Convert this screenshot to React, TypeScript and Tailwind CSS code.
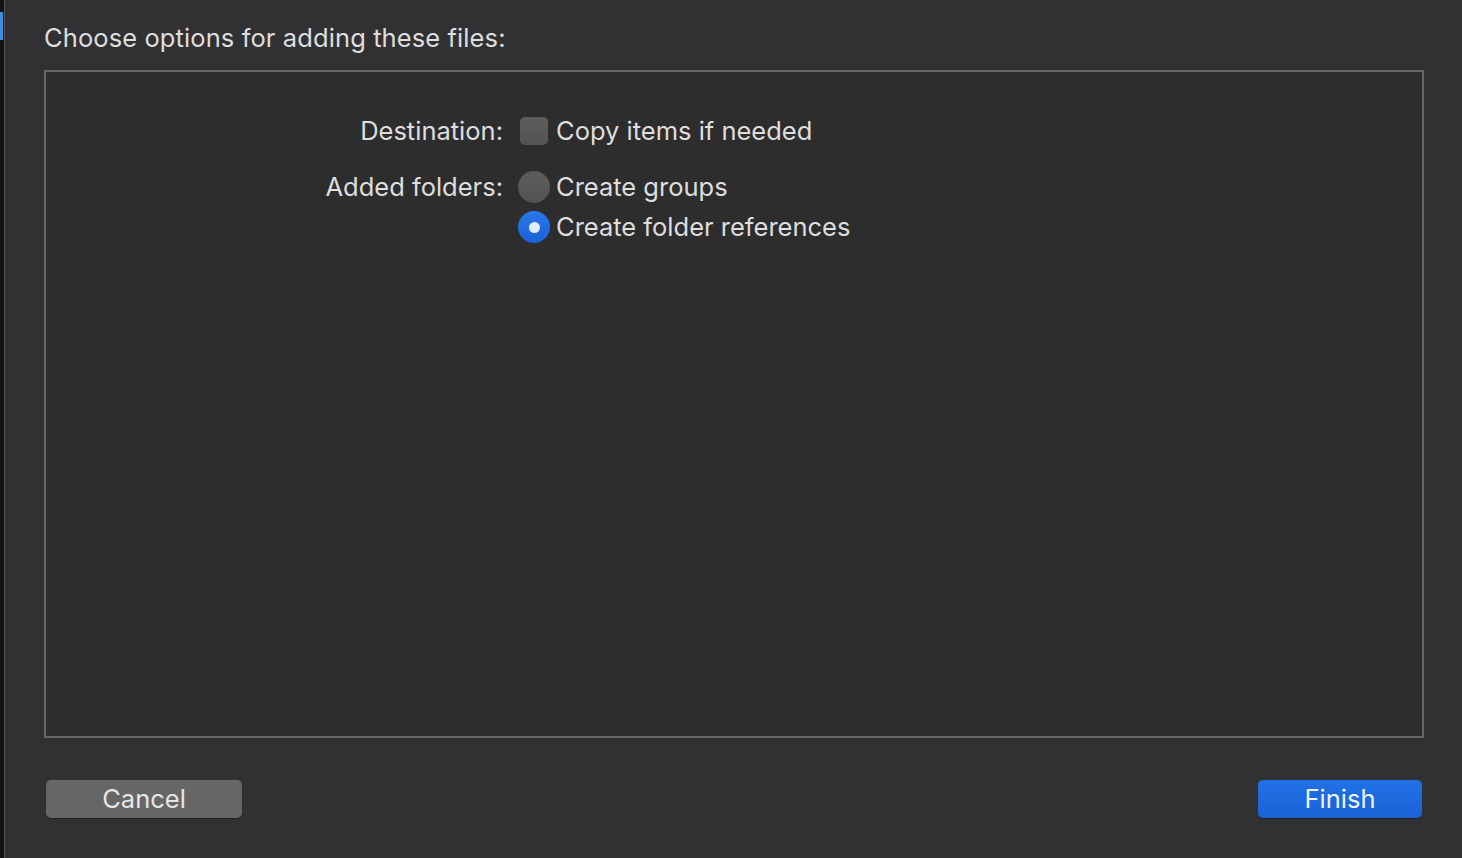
const Radio = ({ checked }: { checked?: boolean }) =>
    checked ? (
        <span className="flex h-[32px] w-[32px] items-center justify-center rounded-full bg-gradient-to-b from-[#2a78ea] to-[#1a62d6]">
            <span className="h-[11px] w-[11px] rounded-full bg-[#e4ebff]" />
        </span>
    ) : (
        <span className="block h-[32px] w-[32px] rounded-full bg-gradient-to-b from-[#5c5c5c] to-[#535353]" />
    );

const App = () => {
    return (
        <div
            className="flex h-[858px] w-[1462px] overflow-hidden bg-[#313133] text-[#dedede]"
            style={{ fontFamily: 'Inter, "Noto Sans", sans-serif' }}
        >
            <div className="relative w-[4px] shrink-0 bg-[#141416]">
                <div className="mt-[12px] h-[28px] w-[3px] bg-[#3b8de0]" />
            </div>
            <div className="w-[1px] shrink-0 bg-[#555557]" />

            <div className="flex flex-1 flex-col pl-[39px] pr-[38px]">
                <h1 className="mt-[22px] h-[32px] text-[25.5px] leading-[32px] tracking-[0.1px]">
                    Choose options for adding these files:
                </h1>

                <div className="mt-[16px] h-[668px] border-2 border-[#666668] bg-[#2d2d2e]">
                    <div className="mt-[41px] grid grid-cols-[457px_1fr] items-center gap-x-[16px]">
                        <div className="h-[36px] text-right text-[25.5px] leading-[36px]">Destination:</div>
                        <div className="flex items-center gap-[8px]">
                            <span className="ml-[1px] block h-[28px] w-[28px] rounded-[5px] bg-gradient-to-b from-[#5d5d5d] to-[#535353]" />
                            <span className="text-[25.5px] leading-[36px]">Copy items if needed</span>
                        </div>

                        <div className="mt-[20px] h-[36px] text-right text-[25.5px] leading-[36px]">Added folders:</div>
                        <div className="mt-[20px] -ml-[1px] flex items-center gap-[6px]">
                            <Radio />
                            <span className="text-[25.5px] leading-[36px]">Create groups</span>
                        </div>

                        <div />
                        <div className="mt-[4px] -ml-[1px] flex items-center gap-[6px]">
                            <Radio checked />
                            <span className="text-[25.5px] leading-[36px]">Create folder references</span>
                        </div>
                    </div>
                </div>

                <div className="mt-[42px] flex justify-between px-[2px]">
                    <button className="h-[38px] w-[196px] rounded-[5px] bg-[#666666] text-[25.5px] leading-[38px] text-[#e6e6e6] shadow-[0_1px_1px_rgba(0,0,0,0.35)]">
                        Cancel
                    </button>
                    <button className="h-[38px] w-[164px] rounded-[5px] bg-gradient-to-b from-[#2171e6] to-[#1a62d6] text-[25.5px] leading-[38px] text-[#eef3ff] shadow-[0_1px_1px_rgba(0,0,0,0.35)]">
                        Finish
                    </button>
                </div>
            </div>
        </div>
    );
};

export default App;
